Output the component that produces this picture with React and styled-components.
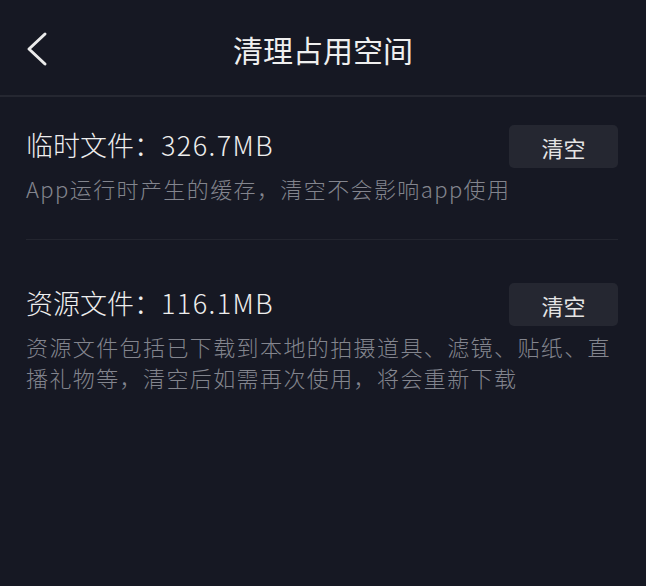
import styled, { createGlobalStyle } from 'styled-components';

const Global = createGlobalStyle`
  html, body {
    margin: 0;
    padding: 0;
    background: #161823;
  }
  body {
    font-family: "Noto Sans CJK SC", "Noto Sans", sans-serif;
    width: 646px;
    height: 586px;
    overflow: hidden;
  }
`;

const Page = styled.div`
  width: 646px;
  height: 586px;
  background: #161823;
  color: #ececec;
`;

const Header = styled.header`
  position: relative;
  height: 95px;
  display: flex;
  align-items: center;
  justify-content: center;
  border-bottom: 2px solid #252731;
`;

const Back = styled.button`
  position: absolute;
  left: 26px;
  top: 31px;
  width: 22px;
  height: 36px;
  padding: 0;
  border: none;
  background: none;
  display: flex;
  align-items: center;
  justify-content: center;
`;

const Title = styled.h1`
  margin: 0;
  font-size: 30px;
  font-weight: 400;
  color: #efefef;
  line-height: 1;
  transform: translateY(1px);
`;

const Content = styled.main`
  padding: 0 28px 0 26px;
`;

const Section = styled.section`
  padding-top: ${(p) => p.$top}px;
  padding-bottom: ${(p) => p.$bottom}px;
  border-bottom: ${(p) => (p.$divider ? '1px solid #23252f' : 'none')};
`;

const Row = styled.div`
  display: flex;
  align-items: center;
  justify-content: space-between;
`;

const Name = styled.div`
  font-size: 27px;
  font-weight: 300;
  line-height: 1;
  color: #eeeeee;
  transform: translateY(-2px);
`;

const Size = styled.span`
  letter-spacing: 1.4px;
`;

const ClearButton = styled.button`
  width: 109px;
  height: 43px;
  border: none;
  border-radius: 5px;
  background: #252731;
  color: #e4e4e4;
  font-family: inherit;
  font-size: 22px;
  padding: 0;
`;

const Desc = styled.p`
  margin: 5px 0 0;
  font-size: 22px;
  font-weight: 300;
  line-height: 31px;
  letter-spacing: 1.4px;
  color: #83858e;
`;

const items = [
  {
    label: '临时文件：',
    size: '326.7MB',
    desc: 'App运行时产生的缓存，清空不会影响app使用',
    top: 28,
    bottom: 35,
    divider: true,
  },
  {
    label: '资源文件：',
    size: '116.1MB',
    desc: '资源文件包括已下载到本地的拍摄道具、滤镜、贴纸、直播礼物等，清空后如需再次使用，将会重新下载',
    top: 43,
    bottom: 0,
    divider: false,
  },
];

export default function App() {
  return (
    <Page>
      <Global />
      <Header>
        <Back aria-label="返回">
          <svg width="22" height="36" viewBox="0 0 22 36" fill="none">
            <polyline
              points="19,3 3,18 19,33"
              stroke="#ebebeb"
              strokeWidth="3"
              strokeLinecap="round"
              strokeLinejoin="round"
            />
          </svg>
        </Back>
        <Title>清理占用空间</Title>
      </Header>
      <Content>
        {items.map((it) => (
          <Section key={it.label} $top={it.top} $bottom={it.bottom} $divider={it.divider}>
            <Row>
              <Name>
                {it.label}
                <Size>{it.size}</Size>
              </Name>
              <ClearButton>清空</ClearButton>
            </Row>
            <Desc>{it.desc}</Desc>
          </Section>
        ))}
      </Content>
    </Page>
  );
}
